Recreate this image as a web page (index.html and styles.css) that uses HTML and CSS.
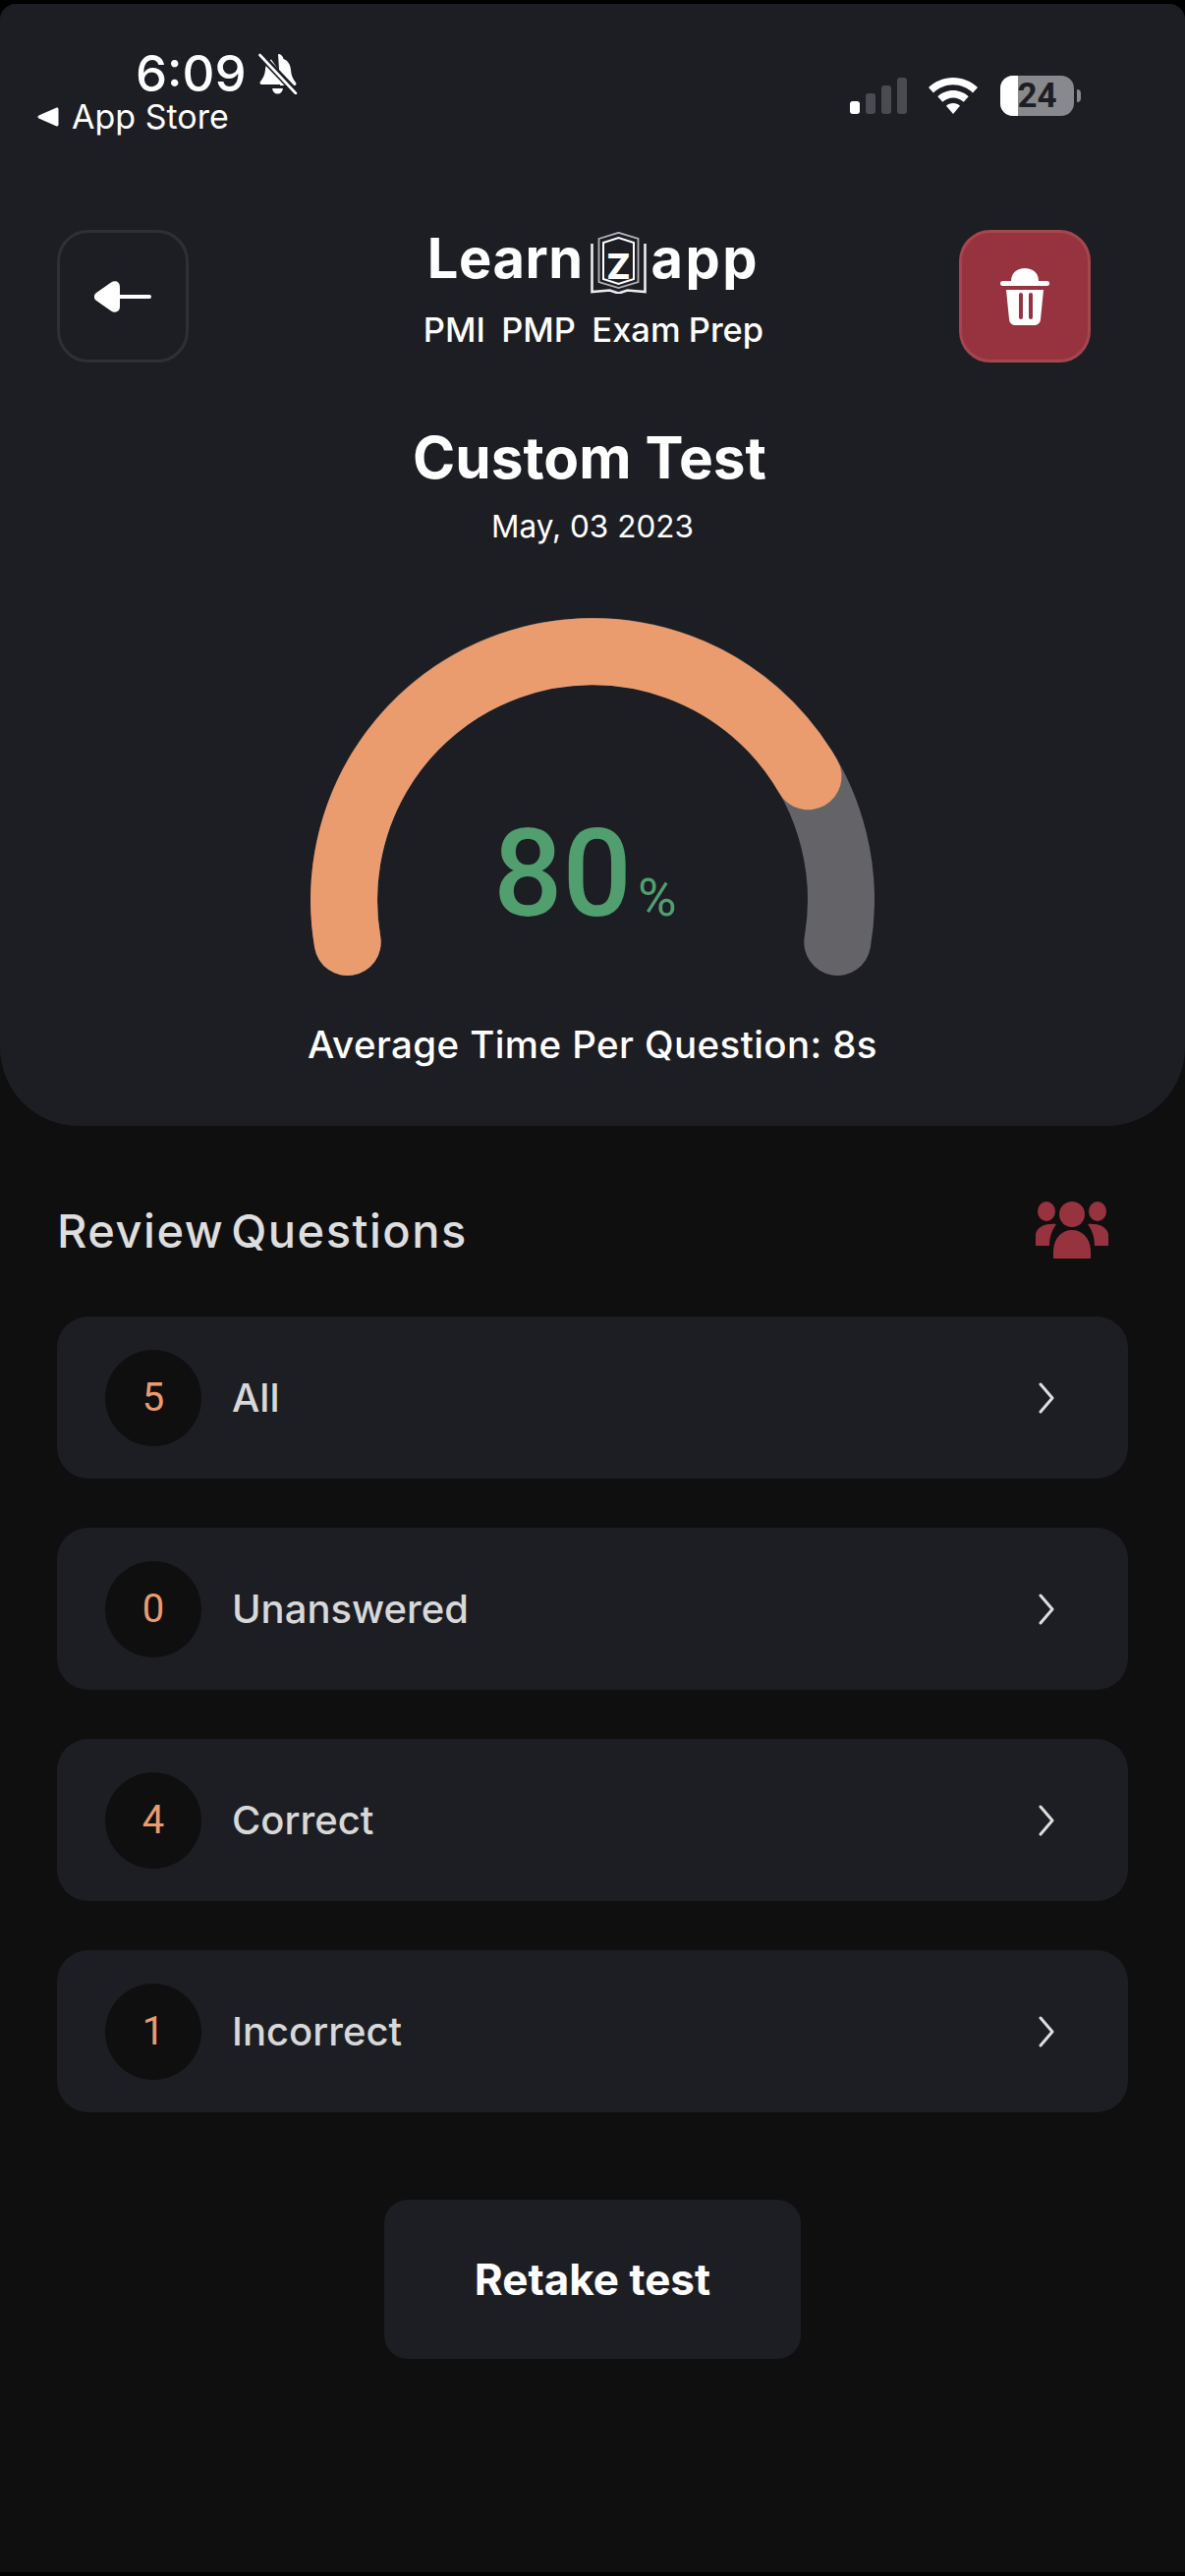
FILE: index.html
```html
<!DOCTYPE html>
<html lang="en">
<head>
    <meta charset="UTF-8">
    <title>Custom Test</title>
    <link rel="stylesheet" href="styles.css">
</head>
<body>
    <div class="screen">
        <header class="panel">
            <div class="statusbar">
                <div class="status-left">
                    <div class="clock">
                        <span class="time">6:09</span>
                        <svg class="bell" viewBox="0 0 40 42">
                            <path d="M20 1c3 0 5 2 5.500 5 5 2 7 6 7.500 11 .5 6 2 9 5 13 1 1.500 .5 3-1.500 3H22z M13 6.500 31 32H3.500c-2 0-2.500-1.500-1.500-3 3-4 4.500-7 5-12 .3-4.500 2-8.500 6-10.500z" fill="#fff"/>
                            <path d="M14 36h11c-.5 3.500-2.500 5.500-5.500 5.500S14.500 39.500 14 36z" fill="#fff"/>
                            <path d="M1.500 1.500 38 40" stroke="#1d1e24" stroke-width="7"/>
                            <path d="M1.500 2 38 41" stroke="#fff" stroke-width="2.600" stroke-linecap="round"/>
                        </svg>
                    </div>
                    <div class="back-app">
                        <svg class="back-tri" viewBox="0 0 22 20"><path d="M1.500 8.500 19 .8c1.500-.6 2.500 0 2.500 1.500v15.400c0 1.500-1 2.100-2.500 1.500L1.500 11.500c-1.400-.7-1.400-2.300 0-3z" fill="#fff"/></svg>
                        <span>App Store</span>
                    </div>
                </div>
                <div class="status-right">
                    <div class="signal">
                        <i class="bar on b1"></i><i class="bar b2"></i><i class="bar b3"></i><i class="bar b4"></i>
                    </div>
                    <svg class="wifi" viewBox="0 0 50 37">
                        <path d="M25 0c9.500 0 18.300 3.700 25 10l-5 5.500C39.500 10.300 32.600 7.300 25 7.300S10.500 10.300 5 15.500L0 10C6.700 3.700 15.500 0 25 0z" fill="#fff"/>
                        <path d="M25 13c6 0 11.500 2.300 15.700 6.200l-5 5.500C32.800 22 29 20.400 25 20.400s-7.800 1.600-10.700 4.300l-5-5.500C13.500 15.300 19 13 25 13z" fill="#fff"/>
                        <path d="M25 26c2.700 0 5.200 1 7 2.700L25 37l-7-8.300c1.800-1.700 4.300-2.700 7-2.700z" fill="#fff"/>
                    </svg>
                    <div class="battery">
                        <div class="battery-body"><span class="battery-fill"></span><span class="battery-num">24</span></div>
                        <span class="battery-nub"></span>
                    </div>
                </div>
            </div>

            <div class="topbar">
                <button class="icon-btn back-btn">
                    <svg width="58" height="34" viewBox="0 0 58 34">
                        <path d="M2 13 17 2.500C21 0 26 1.500 26 7v20c0 5.500-5 7-9 4.500L2 21c-3-2-3-6 0-8z" fill="#fff"/>
                        <rect x="24" y="15" width="34" height="4" rx="2" fill="#fff"/>
                    </svg>
                </button>
                <div class="brand">
                    <div class="logo">
                        <span class="logo-word">Learn</span>
                        <svg class="logo-book" viewBox="8 6 58 63">
                            <path d="M17.500 13 37.500 6.800 57.500 13v44l-20 6-20-6z" fill="none" stroke="#b4b4b6" stroke-width="1.800"/>
                            <path d="M22 17 37.500 12 53 17v37l-15.500 5L22 54z" fill="none" stroke="#fff" stroke-width="2"/>
                            <text x="37.500" y="53.500" text-anchor="middle" class="logo-z">Z</text>
                            <path d="M10.500 18v49l18-1.500 9 3 9-3 18 1.500V18" fill="none" stroke="#ececec" stroke-width="2.600"/>
                        </svg>
                        <span class="logo-word app">app</span>
                    </div>
                    <div class="subtitle">PMI&nbsp; PMP&nbsp; Exam Prep</div>
                </div>
                <button class="icon-btn trash-btn">
                    <svg width="50" height="60" viewBox="0 0 50 60">
                        <path d="M11 14C11 6 17 1 25 1s14 5 14 13z" fill="#fff"/>
                        <rect x="0" y="14" width="50" height="5" rx="2.500" fill="#fff"/>
                        <path d="M6 23h38l-3 30c-.4 4-3 6-7 6H16c-4 0-6.600-2-7-6z" fill="#fff"/>
                        <rect x="19" y="26" width="4" height="27" rx="2" fill="#97333f"/>
                        <rect x="29" y="26" width="4" height="27" rx="2" fill="#97333f"/>
                    </svg>
                </button>
            </div>

            <h1 class="title">Custom Test</h1>
            <div class="date">May, 03 2023</div>

            <div class="gauge">
                <svg class="gauge-arc" width="574" height="364" viewBox="0 0 574 364">
                    <path d="M37.700 330A253 253 0 1 1 536.300 330" fill="none" stroke="#636368" stroke-width="68" stroke-linecap="round"/>
                    <path d="M37.700 330A253 253 0 0 1 506.500 161.300" fill="none" stroke="#ea9c6e" stroke-width="68" stroke-linecap="round"/>
                </svg>
                <div class="score"><span class="score-num">80</span><span class="score-pct">%</span></div>
            </div>
            <div class="avg">Average Time Per Question: 8s</div>
        </header>

        <main class="content">
            <div class="section-head">
                <h2>Review Questions</h2>
                <svg width="76" height="58" viewBox="0 0 76 58" fill="#97333f">
                    <ellipse cx="12" cy="10" rx="9" ry="10"/>
                    <ellipse cx="38" cy="13" rx="13" ry="13"/>
                    <ellipse cx="64" cy="10" rx="9" ry="10"/>
                    <path d="M22 23C14 22 3 24 1 33v12h14c0-8 2-15 7-22z"/>
                    <path d="M54 23c8-1 19 1 21 10v12H61c0-8-2-15-7-22z"/>
                    <path d="M38 29c11 0 19 9 19 22v7H19v-7c0-13 8-22 19-22z"/>
                </svg>
            </div>

            <a class="row"><span class="count">5</span><span class="label">All</span>
                <svg class="chev" width="16" height="32" viewBox="0 0 16 32"><path d="M2 2l12 14L2 30" fill="none" stroke="#dedede" stroke-width="3" stroke-linecap="round" stroke-linejoin="round"/></svg></a>
            <a class="row"><span class="count">0</span><span class="label">Unanswered</span>
                <svg class="chev" width="16" height="32" viewBox="0 0 16 32"><path d="M2 2l12 14L2 30" fill="none" stroke="#dedede" stroke-width="3" stroke-linecap="round" stroke-linejoin="round"/></svg></a>
            <a class="row"><span class="count">4</span><span class="label">Correct</span>
                <svg class="chev" width="16" height="32" viewBox="0 0 16 32"><path d="M2 2l12 14L2 30" fill="none" stroke="#dedede" stroke-width="3" stroke-linecap="round" stroke-linejoin="round"/></svg></a>
            <a class="row"><span class="count">1</span><span class="label">Incorrect</span>
                <svg class="chev" width="16" height="32" viewBox="0 0 16 32"><path d="M2 2l12 14L2 30" fill="none" stroke="#dedede" stroke-width="3" stroke-linecap="round" stroke-linejoin="round"/></svg></a>

            <button class="retake">Retake test</button>
        </main>
    </div>
</body>
</html>
```

FILE: styles.css
```css
html, body {
    margin: 0;
    padding: 0;
    background: #000;
}
.screen {
    width: 1206px;
    height: 2614px;
    margin: 4px 0;
    background: #0f0f10;
    border-radius: 16px 16px 0 0;
    overflow: hidden;
    font-family: Inter, "Liberation Sans", sans-serif;
    color: #fff;
}
.panel {
    height: 1142px;
    box-sizing: border-box;
    background: #1d1e24;
    border-radius: 0 0 80px 80px;
    padding-top: 48px;
}

/* status bar */
.statusbar {
    display: flex;
    justify-content: space-between;
    height: 182px;
}
.status-left {
    padding-left: 38px;
}
.clock {
    display: flex;
    align-items: center;
    margin-left: 100px;
    height: 46px;
}
.time {
    font-size: 51px;
    font-weight: 500;
    line-height: 46px;
}
.bell {
    width: 40px;
    height: 42px;
    margin-left: 12px;
}
.back-app {
    display: flex;
    align-items: center;
    height: 40px;
    margin-top: 1px;
    font-size: 34px;
    line-height: 40px;
}
.back-tri {
    width: 22px;
    height: 20px;
    margin-right: 13px;
}
.status-right {
    display: flex;
    align-items: flex-start;
    padding: 25px 106px 0 0;
}
.signal {
    display: flex;
    align-items: flex-end;
    gap: 6px;
    height: 37px;
    margin: 2px 22px 0 0;
}
.bar {
    display: block;
    width: 10px;
    border-radius: 3px;
    background: #4a4b50;
}
.bar.on { background: #fff; }
.b1 { height: 13px; }
.b2 { height: 21px; }
.b3 { height: 29px; }
.b4 { height: 37px; }
.wifi {
    width: 50px;
    height: 37px;
    margin: 2px 23px 0 0;
}
.battery {
    display: flex;
    align-items: center;
}
.battery-body {
    position: relative;
    width: 75px;
    height: 41px;
    border-radius: 13px;
    overflow: hidden;
    background: #88898c;
    text-align: center;
}
.battery-fill {
    position: absolute;
    left: 0;
    top: 0;
    bottom: 0;
    width: 18px;
    background: #fff;
}
.battery-num {
    position: relative;
    font-family: Roboto, sans-serif;
    font-size: 35px;
    font-weight: 700;
    line-height: 41px;
    color: #1d1e24;
}
.battery-nub {
    width: 4px;
    height: 13px;
    margin-left: 3px;
    border-radius: 0 4px 4px 0;
    background: #88898c;
}

/* back, logo, delete */
.topbar {
    display: flex;
    justify-content: space-between;
    padding: 0 96px 0 58px;
    height: 135px;
}
.icon-btn {
    display: flex;
    align-items: center;
    justify-content: center;
    box-sizing: border-box;
    width: 134px;
    height: 135px;
    padding: 0;
    border-radius: 32px;
    background: none;
}
.back-btn { border: 3px solid #2f3036; }
.trash-btn {
    background: #97333f;
    border: 3px solid #a5464f;
}
.brand {
    display: flex;
    flex-direction: column;
    align-items: center;
    margin-left: 40px;
}
.logo {
    display: flex;
    align-items: flex-start;
    height: 67px;
    margin-top: -1px;
}
.logo-word {
    font-size: 56px;
    font-weight: 700;
    line-height: 60px;
    letter-spacing: .5px;
}
.logo-word.app {
    letter-spacing: 2.500px;
}
.logo-book {
    width: 58px;
    height: 63px;
    margin: 3px 5px 0 6px;
}
.logo-z {
    font-family: Inter, sans-serif;
    font-size: 36px;
    font-weight: 800;
    fill: #fff;
}
.subtitle {
    font-size: 34.500px;
    font-weight: 500;
    line-height: 42px;
    word-spacing: -1px;
    margin-top: 15px;
    white-space: nowrap;
}

/* title and gauge */
.title {
    margin: 61px 0 0;
    padding-right: 6px;
    text-align: center;
    font-size: 58.500px;
    font-weight: 700;
    line-height: 72px;
}
.date {
    margin-top: 14px;
    text-align: center;
    font-size: 31.500px;
    line-height: 40px;
}
.gauge {
    position: relative;
    width: 574px;
    height: 364px;
    margin: 73px auto 0;
}
.gauge-arc {
    display: block;
}
.score {
    position: absolute;
    top: 201px;
    left: 186px;
    display: flex;
    align-items: baseline;
    color: #519e6e;
    font-family: Roboto, sans-serif;
}
.score-num {
    font-size: 124px;
    font-weight: 500;
    line-height: 120px;
}
.score-pct {
    font-size: 54px;
    margin-left: 6px;
}
.avg {
    margin-top: 47px;
    text-align: center;
    font-size: 38.500px;
    font-weight: 500;
    letter-spacing: .4px;
    line-height: 46px;
}

/* review list */
.content {
    padding: 75px 58px 0;
    display: flex;
    flex-direction: column;
}
.section-head {
    display: flex;
    justify-content: space-between;
    align-items: center;
    height: 62px;
    padding-right: 19px;
    margin-bottom: 57px;
}
.section-head h2 {
    margin: 0;
    font-size: 47px;
    font-weight: 500;
    letter-spacing: 1.500px;
    word-spacing: -7px;
    color: #dedede;
}
.row {
    display: flex;
    align-items: center;
    box-sizing: border-box;
    height: 165px;
    margin-bottom: 50px;
    padding: 0 75px 0 49px;
    background: #1d1e24;
    border-radius: 32px;
}
.count {
    width: 98px;
    height: 98px;
    border-radius: 50%;
    background: #0f0f10;
    color: #ea9c6e;
    font-family: Roboto, sans-serif;
    font-size: 40px;
    line-height: 98px;
    text-align: center;
}
.label {
    flex: 1;
    margin-left: 31px;
    font-size: 40px;
    font-weight: 500;
    color: #d8d8d8;
}
.retake {
    align-self: center;
    width: 424px;
    height: 162px;
    margin-top: 39px;
    padding: 0;
    border: 0;
    border-radius: 24px;
    background: #1d1e24;
    color: #fff;
    font-family: inherit;
    font-size: 44px;
    font-weight: 700;
}
```
